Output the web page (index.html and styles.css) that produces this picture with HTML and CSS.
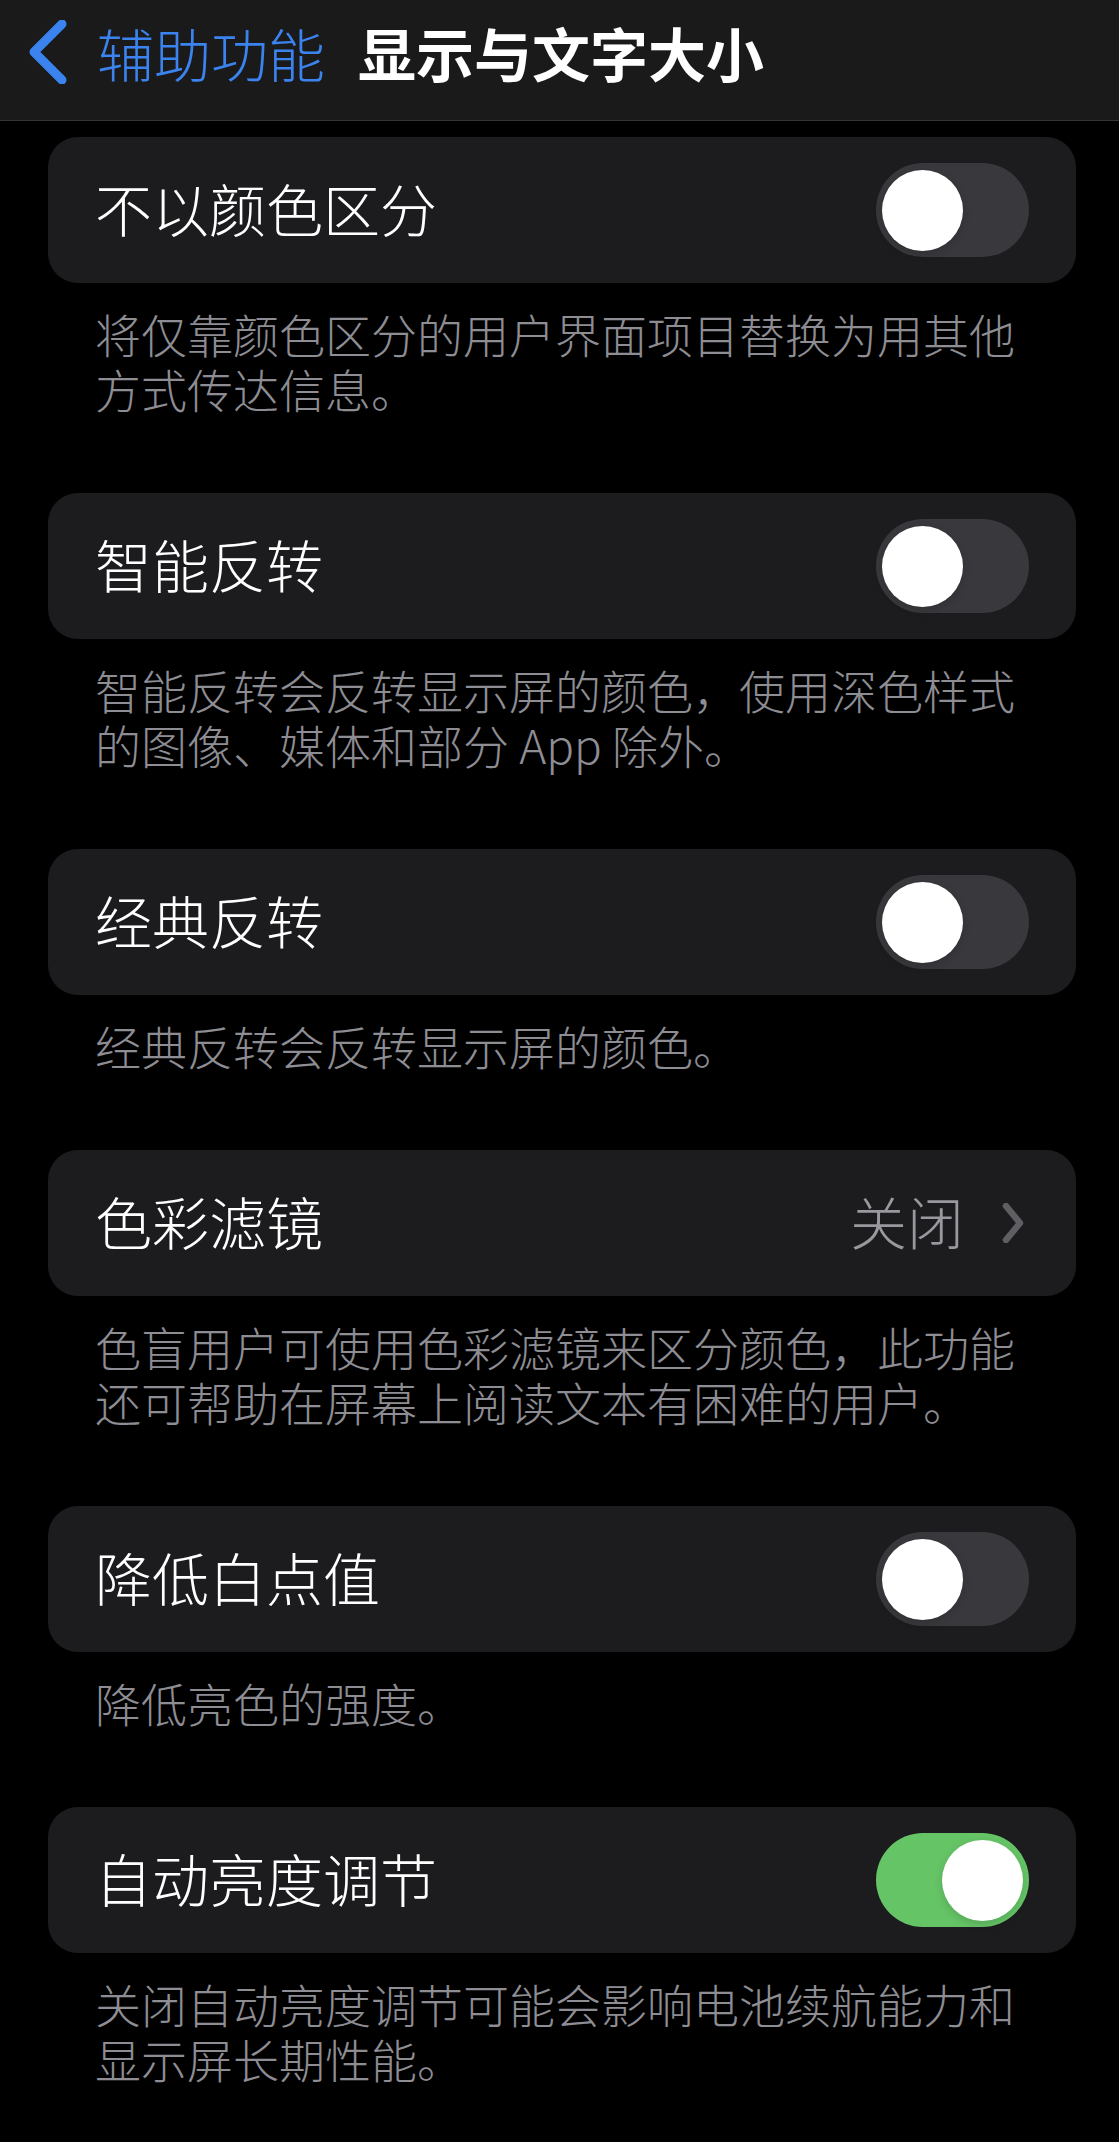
FILE: index.html
```html
<!DOCTYPE html>
<html lang="zh-CN">
<head>
    <meta charset="UTF-8">
    <meta name="viewport" content="width=device-width, initial-scale=1.0">
    <title>显示与文字大小</title>
    <link rel="stylesheet" href="styles.css">
</head>
<body>

    <header class="navbar">
        <a class="back" href="#">
            <svg class="back-icon" width="40" height="64" viewBox="0 0 40 64">
                <path d="M34 4 L6 32 L34 60" fill="none" stroke="currentColor" stroke-width="9" stroke-linecap="round" stroke-linejoin="round"/>
            </svg>
            <span>辅助功能</span>
        </a>
        <h1 class="title">显示与文字大小</h1>
    </header>

    <main class="list">
        <section class="group">
            <div class="cell">
                <span class="cell-label">不以颜色区分</span>
                <span class="switch"><span class="knob"></span></span>
            </div>
            <p class="note">将仅靠颜色区分的用户界面项目替换为用其他方式传达信息。</p>
        </section>

        <section class="group">
            <div class="cell">
                <span class="cell-label">智能反转</span>
                <span class="switch"><span class="knob"></span></span>
            </div>
            <p class="note">智能反转会反转显示屏的颜色，使用深色样式的图像、媒体和部分 App 除外。</p>
        </section>

        <section class="group">
            <div class="cell">
                <span class="cell-label">经典反转</span>
                <span class="switch"><span class="knob"></span></span>
            </div>
            <p class="note">经典反转会反转显示屏的颜色。</p>
        </section>

        <section class="group">
            <a class="cell" href="#">
                <span class="cell-label">色彩滤镜</span>
                <span class="cell-value">
                    <span>关闭</span>
                    <svg class="chevron" width="24" height="40" viewBox="0 0 24 40">
                        <path d="M5 3 L19 20 L5 37" fill="none" stroke="currentColor" stroke-width="6.5" stroke-linecap="round" stroke-linejoin="round"/>
                    </svg>
                </span>
            </a>
            <p class="note">色盲用户可使用色彩滤镜来区分颜色，此功能还可帮助在屏幕上阅读文本有困难的用户。</p>
        </section>

        <section class="group">
            <div class="cell">
                <span class="cell-label">降低白点值</span>
                <span class="switch"><span class="knob"></span></span>
            </div>
            <p class="note">降低亮色的强度。</p>
        </section>

        <section class="group">
            <div class="cell">
                <span class="cell-label">自动亮度调节</span>
                <span class="switch on"><span class="knob"></span></span>
            </div>
            <p class="note">关闭自动亮度调节可能会影响电池续航能力和显示屏长期性能。</p>
        </section>
    </main>

</body>
</html>
```

FILE: styles.css
```css
* {
    margin: 0;
    padding: 0;
    box-sizing: border-box;
}

html {
    background: #000;
}

body {
    font-family: "Noto Sans CJK SC", "Inter", sans-serif;
    background: #000;
    color: #fff;
    min-height: 100vh;
}

a {
    color: inherit;
    text-decoration: none;
}

/* top navigation bar */
.navbar {
    height: 121px;
    background: #1a1a1a;
    border-bottom: 1px solid #353535;
    display: flex;
    align-items: center;
    padding: 0 0 16px 28px;
}

.back {
    display: flex;
    align-items: center;
    gap: 29px;
    color: #3b84ef;
    font-size: 57px;
    font-weight: 300;
    line-height: 1;
}

.back-icon {
    display: block;
    flex-shrink: 0;
}

.title {
    margin-left: 33px;
    font-size: 58px;
    font-weight: 700;
    line-height: 1;
    color: #fff;
}

/* grouped settings list */
.list {
    padding: 16px 43px 0 48px;
}

.group {
    margin-bottom: 77px;
}

.cell {
    height: 146px;
    background: #1c1c1e;
    border-radius: 30px;
    display: flex;
    align-items: center;
    justify-content: space-between;
    padding: 0 47px 0 47px;
}

.cell-label {
    font-size: 57px;
    font-weight: 300;
    line-height: 1;
    margin-top: -5px;
}

.cell-value {
    display: flex;
    align-items: center;
    gap: 37px;
    color: #98989f;
    font-size: 57px;
    font-weight: 300;
    line-height: 1;
}

.cell-value span {
    margin-top: -5px;
}

.chevron {
    display: block;
    color: #5e5e63;
    margin-right: 4px;
}

/* toggle switch */
.switch {
    width: 153px;
    height: 94px;
    border-radius: 47px;
    background: #39393d;
    display: flex;
    align-items: center;
    padding: 0 6px;
}

.switch.on {
    background: #65c466;
    justify-content: flex-end;
}

.knob {
    width: 81px;
    height: 81px;
    border-radius: 50%;
    background: #fff;
    box-shadow: 0 3px 8px rgba(0, 0, 0, 0.15);
}

.note {
    margin-top: 23px;
    padding: 0 50px 0 47px;
    font-size: 46px;
    font-weight: 300;
    line-height: 55px;
    color: #8d8d93;
}
```
